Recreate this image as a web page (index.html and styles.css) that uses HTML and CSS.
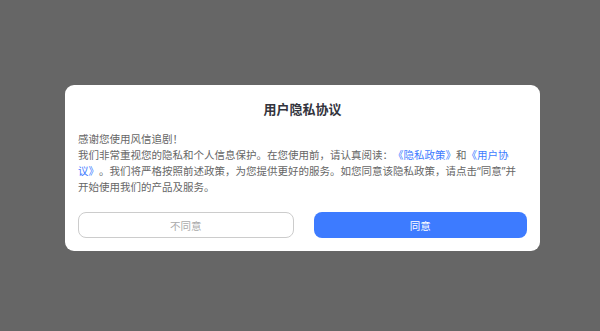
FILE: index.html
```html
<!DOCTYPE html>
<html lang="zh-CN">
<head>
<meta charset="utf-8">
<link rel="stylesheet" href="styles.css">
</head>
<body>
<div class="overlay">
  <div class="dialog">
    <h1 class="title">用户隐私协议</h1>
    <div class="content">
      <p>感谢您使用风信追剧！</p>
      <p>我们非常重视您的隐私和个人信息保护。在您使用前，请认真阅读：<a class="link">《隐私政策》</a>和<a class="link">《用户协议》</a>。我们将严格按照前述政策，为您提供更好的服务。如您同意该隐私政策，请点击“同意”并开始使用我们的产品及服务。</p>
    </div>
    <div class="actions">
      <button class="btn btn-ghost">不同意</button>
      <button class="btn btn-primary">同意</button>
    </div>
  </div>
</div>
</body>
</html>
```

FILE: styles.css
```css
html, body {
  margin: 0;
  padding: 0;
}
body {
  width: 600px;
  height: 331px;
  background: #666666;
  font-family: "Noto Sans", "Noto Sans CJK SC", sans-serif;
}
.overlay {
  height: 331px;
  box-sizing: border-box;
  padding-top: 85px;
  padding-left: 65px;
}
.dialog {
  width: 475px;
  box-sizing: border-box;
  background: #ffffff;
  border-radius: 9px;
  padding: 15px 13px 13px 13px;
}
.title {
  margin: 0;
  font-size: 13px;
  line-height: 18px;
  font-weight: 700;
  color: #33343d;
  text-align: center;
}
.content {
  margin-top: 13px;
  padding-right: 6px;
  font-size: 10.5px;
  line-height: 16px;
  color: #666666;
  text-spacing-trim: space-all;
  font-kerning: none;
}
.content p {
  margin: 0;
}
.link {
  color: #3d7bff;
}
.actions {
  margin-top: 17px;
  display: flex;
  gap: 20px;
}
.btn {
  flex: 1;
  height: 26px;
  border-radius: 8px;
  font-family: "Noto Sans", "Noto Sans CJK SC", sans-serif;
  font-size: 10.5px;
  padding: 0;
  box-sizing: border-box;
}
.btn-ghost {
  background: #ffffff;
  border: 1px solid #cccccc;
  color: #aaaaaa;
}
.btn-primary {
  background: #3d7bff;
  border: none;
  color: #ffffff;
}
```
